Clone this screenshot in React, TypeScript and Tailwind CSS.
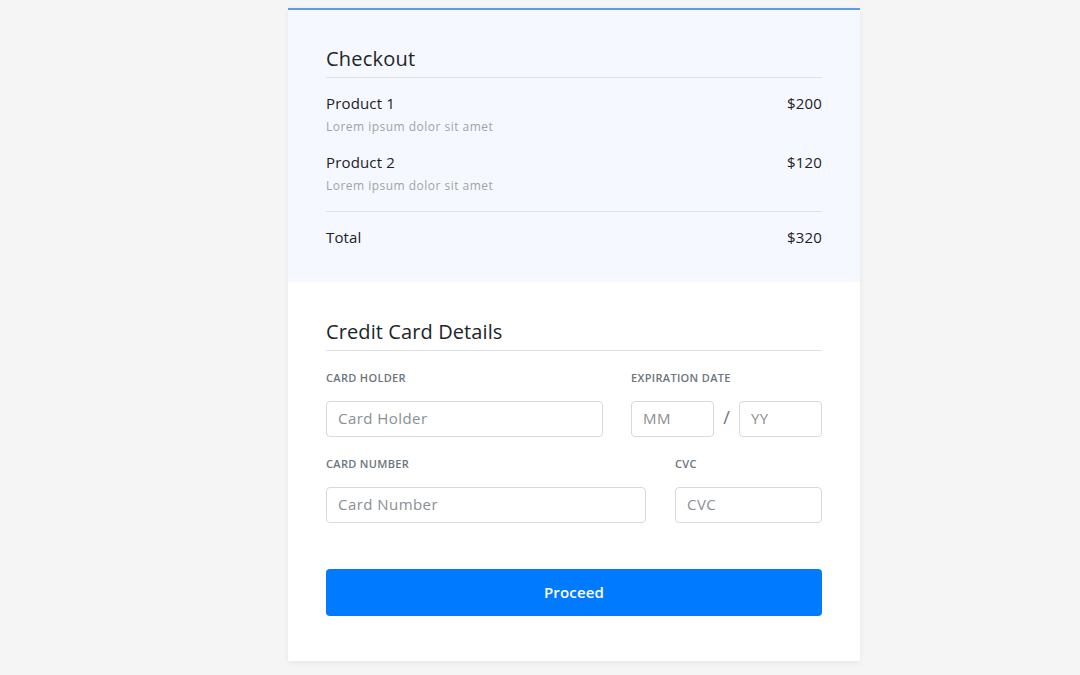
import React from 'react';

const items = [
  { name: 'Product 1', desc: 'Lorem ipsum dolor sit amet', price: '$200' },
  { name: 'Product 2', desc: 'Lorem ipsum dolor sit amet', price: '$120' },
];

const inputCls =
  'block h-[36px] rounded-[4px] border border-[#d6d9dd] bg-white px-[11px] pb-[3px] text-[15px] tracking-[0.03em] text-[#495057] placeholder:text-[#8a8f94] outline-none';

function Label({ children }: { children: React.ReactNode }) {
  return (
    <label className="block text-[11px] leading-[16px] font-semibold tracking-[0.03em] uppercase text-[#6c757d]">
      {children}
    </label>
  );
}

function Field({ label, placeholder }: { label: string; placeholder: string }) {
  return (
    <div>
      <Label>{label}</Label>
      <input placeholder={placeholder} className={`mt-[15px] w-full ${inputCls}`} />
    </div>
  );
}

export default function App() {
  return (
    <div className="min-h-screen bg-[#f5f5f5] pt-[8px] font-['Open_Sans',sans-serif] text-[#212529]">
      <div className="ml-[288px] w-[572px] border-t-2 border-[#5b9be8] bg-white shadow-[0_2px_6px_rgba(0,0,0,0.06)]">
        <div className="bg-[#f5f9ff] px-[38px] pt-[37px] pb-[34px]">
          <h2 className="border-b border-[#dfe2e6] pb-[6px] text-[20px] leading-[24px] font-medium tracking-[0.01em]">Checkout</h2>
          <div className="border-b border-[#dfe2e6] pb-[16px]">
            {items.map((it, i) => (
              <div key={it.name} className={i === 0 ? 'mt-[14px]' : 'mt-[15px]'}>
                <div className="flex justify-between text-[15px] leading-[22px] font-medium tracking-[0.01em] text-[#1d2124]">
                  <span>{it.name}</span>
                  <span>{it.price}</span>
                </div>
                <div className="mt-[4px] text-[12px] leading-[18px] tracking-[0.04em] text-[#a3a3a3]">{it.desc}</div>
              </div>
            ))}
          </div>
          <div className="mt-[14px] flex justify-between text-[15px] leading-[22px] font-medium tracking-[0.01em] text-[#1d2124]">
            <span>Total</span>
            <span>$320</span>
          </div>
        </div>

        <div className="px-[38px] pt-[38px] pb-[45px]">
          <h2 className="border-b border-[#dfe2e6] pb-[6px] text-[20px] leading-[24px] font-medium tracking-[0.005em]">Credit Card Details</h2>

          <div className="mt-[19px] grid grid-cols-[277px_1fr] gap-x-[28px]">
            <Field label="Card Holder" placeholder="Card Holder" />
            <div>
              <Label>Expiration Date</Label>
              <div className="mt-[15px] flex items-center">
                <input placeholder="MM" className={`w-[83px] ${inputCls}`} />
                <span className="flex-1 text-center text-[18px] text-[#6c757d] -translate-y-[2px]">/</span>
                <input placeholder="YY" className={`w-[83px] ${inputCls}`} />
              </div>
            </div>
          </div>

          <div className="mt-[19px] grid grid-cols-[320px_1fr] gap-x-[29px]">
            <Field label="Card Number" placeholder="Card Number" />
            <Field label="CVC" placeholder="CVC" />
          </div>

          <button className="mt-[46px] block w-full h-[47px] rounded-[4px] bg-[#007bff] text-[15px] font-semibold tracking-[0.01em] text-white">
            Proceed
          </button>
        </div>
      </div>
    </div>
  );
}
